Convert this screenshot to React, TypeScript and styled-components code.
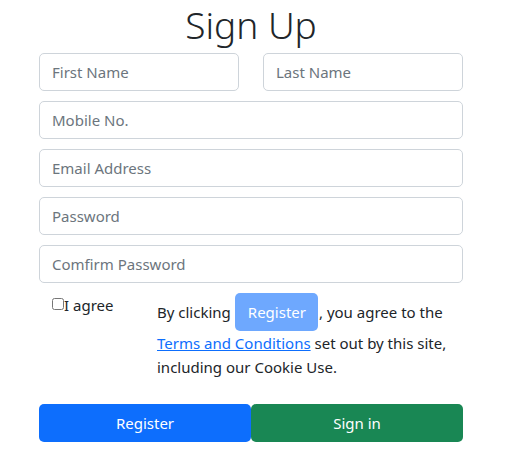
import React from "react";
import styled, { createGlobalStyle } from "styled-components";

const GlobalStyle = createGlobalStyle`
  body {
    margin: 0;
    background: #fff;
    color: #212529;
    font-family: "Noto Sans", "Open Sans", sans-serif;
    font-size: 15px;
    line-height: 24px;
  }
`;

const Page = styled.div`
  width: 424px;
  margin-left: 39px;
`;

const Title = styled.h1`
  margin: 0 0 5px;
  padding-top: 1px;
  text-align: center;
  font-size: 37px;
  font-weight: 300;
  line-height: 47px;
  color: #212529;
`;

const Form = styled.form`
  display: flex;
  flex-direction: column;
  gap: 10px;
`;

const NameRow = styled.div`
  display: grid;
  grid-template-columns: 1fr 1fr;
  column-gap: 24px;
`;

const Field = styled.input`
  box-sizing: border-box;
  width: 100%;
  height: 38px;
  padding: 6px 12px;
  font: inherit;
  font-size: 15px;
  color: #212529;
  background: #fff;
  border: 1px solid #ced4da;
  border-radius: 5px;
  outline: none;
  &::placeholder {
    color: #6c757d;
    opacity: 1;
  }
`;

const AgreeRow = styled.div`
  display: grid;
  grid-template-columns: 105px 1fr;
  padding-left: 13px;
  line-height: 24px;
`;

const CheckLabel = styled.label`
  display: flex;
  align-items: flex-start;
  line-height: 24px;
  color: #212529;
`;

const Check = styled.input`
  width: 12px;
  height: 12px;
  margin: 5px 0 0;
`;

const Terms = styled.p`
  margin: 0;
  line-height: 24px;
`;

const InlineButton = styled.span`
  display: inline-block;
  padding: 7px 12px 7px 13px;
  margin: 0 1px 0 4px;
  line-height: 24px;
  color: #fff;
  background: #6ea8fe;
  border-radius: 5px;
`;

const Link = styled.a`
  color: #0d6efd;
  text-decoration: underline;
`;

const ButtonRow = styled.div`
  display: grid;
  grid-template-columns: 212px 1fr;
  margin-top: 25px;
`;

const Button = styled.button<{ $variant: "primary" | "success" }>`
  height: 38px;
  border: none;
  border-radius: 5px;
  font: inherit;
  font-size: 15px;
  color: #fff;
  background: ${(p) => (p.$variant === "primary" ? "#0d6efd" : "#198754")};
  cursor: pointer;
`;

export default function App() {
  return (
    <>
      <GlobalStyle />
      <Page>
        <Title>Sign Up</Title>
        <Form onSubmit={(e) => e.preventDefault()}>
          <NameRow>
            <Field placeholder="First Name" />
            <Field placeholder="Last Name" />
          </NameRow>
          <Field placeholder="Mobile No." />
          <Field placeholder="Email Address" />
          <Field placeholder="Password" type="password" />
          <Field placeholder="Comfirm Password" type="password" />
          <AgreeRow>
            <CheckLabel>
              <Check type="checkbox" />I agree
            </CheckLabel>
            <Terms>
              By clicking<InlineButton>Register</InlineButton>, you agree to the{" "}
              <Link href="#">Terms and Conditions</Link> set out by this site,
              including our Cookie Use.
            </Terms>
          </AgreeRow>
        </Form>
        <ButtonRow>
          <Button $variant="primary" type="button">Register</Button>
          <Button $variant="success" type="button">Sign in</Button>
        </ButtonRow>
      </Page>
    </>
  );
}
